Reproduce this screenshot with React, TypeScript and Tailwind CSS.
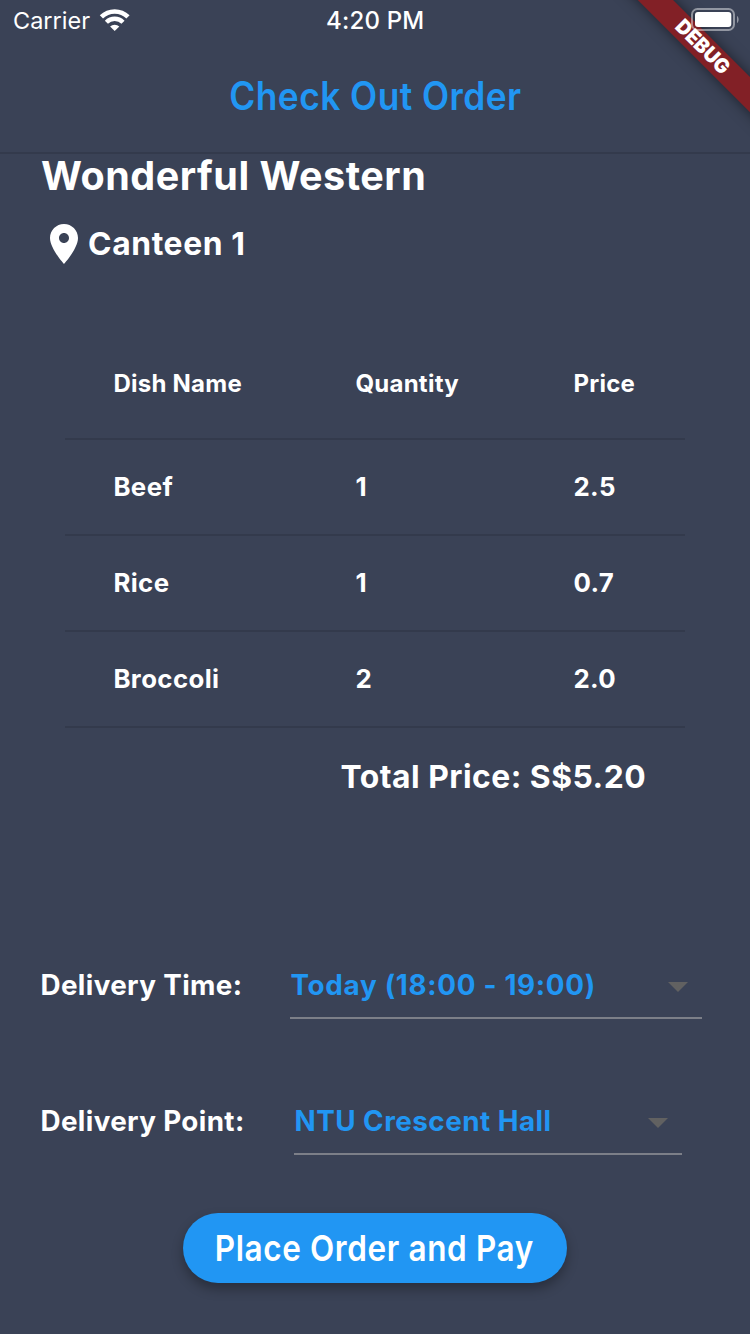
import type { ReactNode } from 'react';

const dishes = [
  { name: 'Beef', quantity: '1', price: '2.5' },
  { name: 'Rice', quantity: '1', price: '0.7' },
  { name: 'Broccoli', quantity: '2', price: '2.0' },
];

function WifiIcon() {
  return (
    <svg className="ml-[9px] h-[24px] w-[32px]" viewBox="0 0 32 24" fill="none">
      <path d="M2.4 8.9a19 19 0 0 1 26.6 0" stroke="white" strokeWidth="4.6" />
      <path d="M7.4 14.2a11.8 11.8 0 0 1 16.6 0" stroke="white" strokeWidth="4.4" />
      <path d="M15.7 23.1l-4.6-4.6a6.6 6.6 0 0 1 9.2 0z" fill="white" />
    </svg>
  );
}

function BatteryIcon() {
  return (
    <svg className="h-[24px] w-[50px]" viewBox="0 0 50 24" fill="none">
      <rect x="3" y="1" width="42" height="21" rx="5.5" stroke="white" strokeOpacity="0.45" strokeWidth="2" />
      <rect x="6" y="4" width="36.3" height="15" rx="3" fill="white" />
      <path d="M48 8c2.2 1.2 2.2 5.8 0 7z" fill="white" fillOpacity="0.45" />
    </svg>
  );
}

function StatusBar() {
  return (
    <div className="relative z-20 flex h-[40px] items-center">
      <div className="flex w-[326px] shrink-0 items-center pl-[13px]">
        <span className="pt-[2px] text-[23.5px] font-normal">Carrier</span>
        <WifiIcon />
      </div>
      <span className="pt-[2px] text-[24px] font-medium tracking-[0.2px]">4:20 PM</span>
      <div className="flex flex-1 justify-end pr-[11px]">
        <BatteryIcon />
      </div>
    </div>
  );
}

function DebugBanner() {
  return (
    <div className="absolute right-0 top-0 z-10 h-[150px] w-[150px] overflow-hidden">
      <div className="absolute left-[2.6px] top-[35.4px] flex h-[24.5px] w-[200px] rotate-45 items-center justify-center bg-[#822026] pr-[2px] shadow-[0_0_14px_rgba(0,0,0,0.5)]">
        <span className="scale-x-[0.95] text-[20.4px] font-black leading-none">DEBUG</span>
      </div>
    </div>
  );
}

function TableRow({ cells, className }: { cells: string[]; className: string }) {
  return (
    <div
      className={`grid grid-cols-[242px_218px_1fr] items-center border-b-2 border-[#333a4c] pl-[48.4px] ${className}`}
    >
      {cells.map((cell, i) => (
        <span key={i}>{cell}</span>
      ))}
    </div>
  );
}

function Field({ label, value, className }: { label: ReactNode; value: ReactNode; className: string }) {
  return (
    <div className={`grid h-[64px] text-[27.8px] font-bold ${className}`}>
      <span className="flex h-[62px] items-center tracking-[0.36px]">{label}</span>
      <div className="flex items-center justify-between border-b-2 border-[#7c7f88]">
        <span className="whitespace-nowrap pl-[0.5px] text-[#2196f3]">{value}</span>
        <svg className="h-[48px] w-[48px] shrink-0" viewBox="0 0 24 24" fill="#616161">
          <path d="M7 10l5 5 5-5z" />
        </svg>
      </div>
    </div>
  );
}

export default function App() {
  return (
    <div className="relative flex h-[1334px] w-[750px] flex-col overflow-hidden bg-[#3a4256] font-['Inter',sans-serif] text-white">
      <StatusBar />
      <DebugBanner />
      <header className="flex h-[114px] items-center justify-center border-b-2 border-[#333a4c]">
        <h1 className="scale-x-[0.905] whitespace-nowrap text-[39px] font-semibold tracking-[0.5px] text-[#2196f3]">
          Check Out Order
        </h1>
      </header>

      <h2 className="flex h-[44px] items-center pl-[41px] pt-[2px] text-[39.5px] font-bold tracking-[0.5px]">
        Wonderful Western
      </h2>
      <div className="mt-[22px] flex h-[48px] items-center pl-[40px]">
        <svg className="h-[48px] w-[48px]" viewBox="0 0 24 24" fill="white">
          <path d="M12 2C8.13 2 5 5.13 5 9c0 5.25 7 13 7 13s7-7.75 7-13c0-3.87-3.13-7-7-7zm0 9.5c-1.38 0-2.5-1.12-2.5-2.5s1.12-2.5 2.5-2.5 2.5 1.12 2.5 2.5-1.12 2.5-2.5 2.5z" />
        </svg>
        <span className="text-[31.8px] font-bold tracking-[0.62px]">Canteen 1</span>
      </div>

      <section className="ml-[65px] mt-[60px] w-[620px]">
        <TableRow
          cells={['Dish Name', 'Quantity', 'Price']}
          className="h-[112px] pt-[2px] text-[24px] font-bold tracking-[0.25px]"
        />
        {dishes.map((dish) => (
          <TableRow
            key={dish.name}
            cells={[dish.name, dish.quantity, dish.price]}
            className="h-[96px] text-[25.8px] font-bold tracking-[0.4px]"
          />
        ))}
      </section>
      <div className="flex h-[98px] items-center pl-[340.5px] text-[31.8px] font-bold tracking-[0.5px]">
        Total Price: S$5.20
      </div>

      <Field
        label="Delivery Time:"
        value={<span className="tracking-[0.7px]">Today (18:00 - 19:00)</span>}
        className="mt-[129px] grid-cols-[249.5px_412px] pl-[40.5px]"
      />
      <Field
        label="Delivery Point:"
        value={<span className="tracking-[0.48px]">NTU Crescent Hall</span>}
        className="mt-[72px] grid-cols-[253.5px_388px] pl-[40.5px]"
      />

      <button className="ml-[183px] mt-[58px] flex h-[70px] w-[384px] items-center justify-center rounded-full bg-[#2196f3] pr-[1px] pt-[2px] shadow-[0_6px_12px_rgba(0,0,0,0.3)]">
        <span className="scale-x-[0.88] whitespace-nowrap text-[35.8px] font-semibold leading-none tracking-[0.7px]">
          Place Order and Pay
        </span>
      </button>
    </div>
  );
}
